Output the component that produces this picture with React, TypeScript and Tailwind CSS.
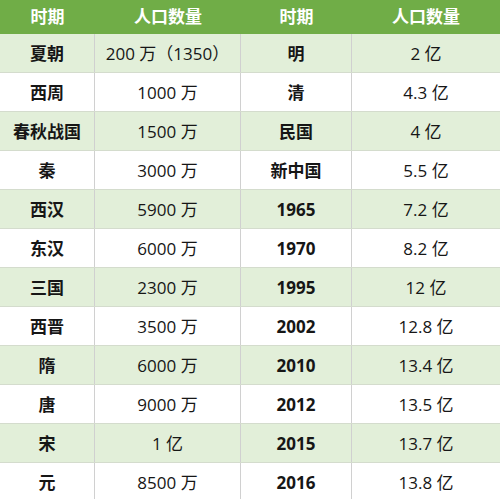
const rows: [string, string, string, string][] = [
  ['夏朝', '200 万（1350）', '明', '2 亿'],
  ['西周', '1000 万', '清', '4.3 亿'],
  ['春秋战国', '1500 万', '民国', '4 亿'],
  ['秦', '3000 万', '新中国', '5.5 亿'],
  ['西汉', '5900 万', '1965', '7.2 亿'],
  ['东汉', '6000 万', '1970', '8.2 亿'],
  ['三国', '2300 万', '1995', '12 亿'],
  ['西晋', '3500 万', '2002', '12.8 亿'],
  ['隋', '6000 万', '2010', '13.4 亿'],
  ['唐', '9000 万', '2012', '13.5 亿'],
  ['宋', '1 亿', '2015', '13.7 亿'],
  ['元', '8500 万', '2016', '13.8 亿'],
]

const font = { fontFamily: '"Open Sans", "Noto Sans CJK SC", sans-serif' }
const cols = 'grid grid-cols-[95px_146px_111px_148px]'

export default function App() {
  return (
    <div className="w-[500px] h-[499px] overflow-hidden bg-white text-[#161616]" style={font}>
      {/* header */}
      <div className={`${cols} h-[34px] bg-[#70ad47] text-white font-bold text-[17px]`}>
        <div className="flex items-center justify-center">时期</div>
        <div className="flex items-center justify-center">人口数量</div>
        <div className="flex items-center justify-center">时期</div>
        <div className="flex items-center justify-center">人口数量</div>
      </div>
      {rows.map((r, i) => (
        <div
          key={i}
          className={`${cols} h-[39px] border-b border-[#d4dccd] text-[17px] ${i % 2 === 0 ? 'bg-[#e2efd9]' : 'bg-white'}`}
        >
          <div className="flex items-center justify-center pt-[2px] font-bold border-r border-[#d0d0d0]">{r[0]}</div>
          <div className="flex items-center justify-center pt-[2px] border-r border-[#d0d0d0]">{r[1]}</div>
          <div className="flex items-center justify-center pt-[2px] font-bold border-r border-[#d0d0d0]">{r[2]}</div>
          <div className="flex items-center justify-center pt-[2px]">{r[3]}</div>
        </div>
      ))}
    </div>
  )
}
